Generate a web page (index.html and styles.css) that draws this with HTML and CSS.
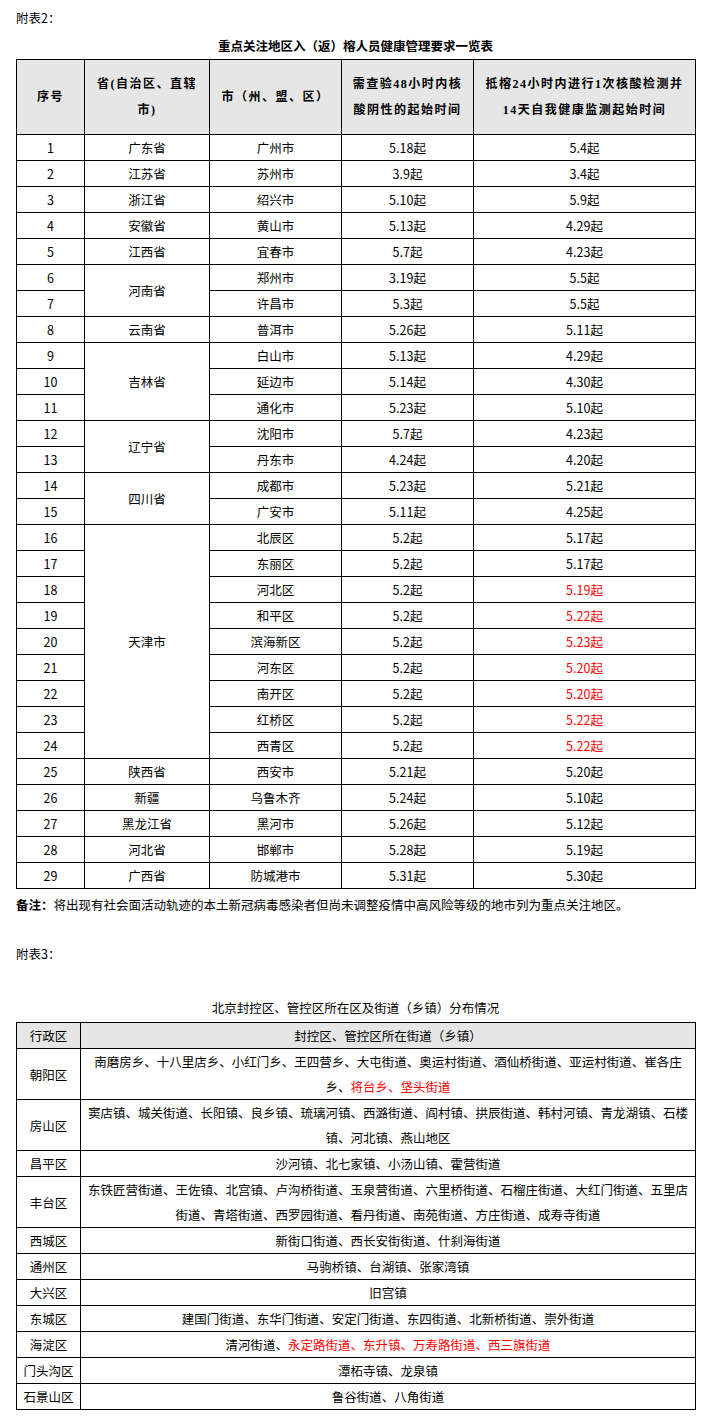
FILE: index.html
```html
<!DOCTYPE html>
<html lang="zh-CN">
<head>
<meta charset="utf-8">
<title>附表</title>
<link rel="stylesheet" href="styles.css">
</head>
<body>
<p class="label">附表2：</p>
<p class="title bold">重点关注地区入（返）榕人员健康管理要求一览表</p>
<table class="t1">
<colgroup><col class="c1"><col class="c2"><col class="c3"><col class="c4"><col class="c5"></colgroup>
<thead>
<tr>
<th>序号</th>
<th>省(自治区、直辖<br>市)</th>
<th>市（州、盟、区）</th>
<th>需查验48小时内核<br>酸阴性的起始时间</th>
<th>抵榕24小时内进行1次核酸检测并<br>14天自我健康监测起始时间</th>
</tr>
</thead>
<tbody>
<tr><td>1</td><td>广东省</td><td>广州市</td><td>5.18起</td><td>5.4起</td></tr>
<tr><td>2</td><td>江苏省</td><td>苏州市</td><td>3.9起</td><td>3.4起</td></tr>
<tr><td>3</td><td>浙江省</td><td>绍兴市</td><td>5.10起</td><td>5.9起</td></tr>
<tr><td>4</td><td>安徽省</td><td>黄山市</td><td>5.13起</td><td>4.29起</td></tr>
<tr><td>5</td><td>江西省</td><td>宜春市</td><td>5.7起</td><td>4.23起</td></tr>
<tr><td>6</td><td rowspan="2">河南省</td><td>郑州市</td><td>3.19起</td><td>5.5起</td></tr>
<tr><td>7</td><td>许昌市</td><td>5.3起</td><td>5.5起</td></tr>
<tr><td>8</td><td>云南省</td><td>普洱市</td><td>5.26起</td><td>5.11起</td></tr>
<tr><td>9</td><td rowspan="3">吉林省</td><td>白山市</td><td>5.13起</td><td>4.29起</td></tr>
<tr><td>10</td><td>延边市</td><td>5.14起</td><td>4.30起</td></tr>
<tr><td>11</td><td>通化市</td><td>5.23起</td><td>5.10起</td></tr>
<tr><td>12</td><td rowspan="2">辽宁省</td><td>沈阳市</td><td>5.7起</td><td>4.23起</td></tr>
<tr><td>13</td><td>丹东市</td><td>4.24起</td><td>4.20起</td></tr>
<tr><td>14</td><td rowspan="2">四川省</td><td>成都市</td><td>5.23起</td><td>5.21起</td></tr>
<tr><td>15</td><td>广安市</td><td>5.11起</td><td>4.25起</td></tr>
<tr><td>16</td><td rowspan="9">天津市</td><td>北辰区</td><td>5.2起</td><td>5.17起</td></tr>
<tr><td>17</td><td>东丽区</td><td>5.2起</td><td>5.17起</td></tr>
<tr><td>18</td><td>河北区</td><td>5.2起</td><td class="red">5.19起</td></tr>
<tr><td>19</td><td>和平区</td><td>5.2起</td><td class="red">5.22起</td></tr>
<tr><td>20</td><td>滨海新区</td><td>5.2起</td><td class="red">5.23起</td></tr>
<tr><td>21</td><td>河东区</td><td>5.2起</td><td class="red">5.20起</td></tr>
<tr><td>22</td><td>南开区</td><td>5.2起</td><td class="red">5.20起</td></tr>
<tr><td>23</td><td>红桥区</td><td>5.2起</td><td class="red">5.22起</td></tr>
<tr><td>24</td><td>西青区</td><td>5.2起</td><td class="red">5.22起</td></tr>
<tr><td>25</td><td>陕西省</td><td>西安市</td><td>5.21起</td><td>5.20起</td></tr>
<tr><td>26</td><td>新疆</td><td>乌鲁木齐</td><td>5.24起</td><td>5.10起</td></tr>
<tr><td>27</td><td>黑龙江省</td><td>黑河市</td><td>5.26起</td><td>5.12起</td></tr>
<tr><td>28</td><td>河北省</td><td>邯郸市</td><td>5.28起</td><td>5.19起</td></tr>
<tr><td>29</td><td>广西省</td><td>防城港市</td><td>5.31起</td><td>5.30起</td></tr>
</tbody>
</table>
<p class="note"><b>备注：</b>将出现有社会面活动轨迹的本土新冠病毒感染者但尚未调整疫情中高风险等级的地市列为重点关注地区。</p>
<p class="label label3">附表3：</p>
<p class="title title3">北京封控区、管控区所在区及街道（乡镇）分布情况</p>
<table class="t3">
<colgroup><col class="d1"><col class="d2"></colgroup>
<thead>
<tr><th>行政区</th><th>封控区、管控区所在街道（乡镇）</th></tr>
</thead>
<tbody>
<tr><td>朝阳区</td><td>南磨房乡、十八里店乡、小红门乡、王四营乡、大屯街道、奥运村街道、酒仙桥街道、亚运村街道、崔各庄乡、<span class="red">将台乡、垡头街道</span></td></tr>
<tr><td>房山区</td><td>窦店镇、城关街道、长阳镇、良乡镇、琉璃河镇、西潞街道、阎村镇、拱辰街道、韩村河镇、青龙湖镇、石楼镇、河北镇、燕山地区</td></tr>
<tr><td>昌平区</td><td>沙河镇、北七家镇、小汤山镇、霍营街道</td></tr>
<tr><td>丰台区</td><td>东铁匠营街道、王佐镇、北宫镇、卢沟桥街道、玉泉营街道、六里桥街道、石榴庄街道、大红门街道、五里店街道、青塔街道、西罗园街道、看丹街道、南苑街道、方庄街道、成寿寺街道</td></tr>
<tr><td>西城区</td><td>新街口街道、西长安街街道、什刹海街道</td></tr>
<tr><td>通州区</td><td>马驹桥镇、台湖镇、张家湾镇</td></tr>
<tr><td>大兴区</td><td>旧宫镇</td></tr>
<tr><td>东城区</td><td>建国门街道、东华门街道、安定门街道、东四街道、北新桥街道、崇外街道</td></tr>
<tr><td>海淀区</td><td>清河街道、<span class="red">永定路街道、东升镇、万寿路街道、西三旗街道</span></td></tr>
<tr><td>门头沟区</td><td>潭柘寺镇、龙泉镇</td></tr>
<tr><td>石景山区</td><td>鲁谷街道、八角街道</td></tr>
</tbody>
</table>
</body>
</html>
```

FILE: styles.css
```css
html, body {
  margin: 0;
  padding: 0;
  background: #ffffff;
}
body {
  padding: 5px 16px 0 16px;
  font-family: "Noto Sans CJK SC", "Noto Sans", sans-serif;
  font-size: 12.5px;
  line-height: 25px;
  color: #000000;
}
p {
  margin: 0;
}
.label {
  height: 25px;
}
.title {
  margin-top: 3px;
  margin-bottom: 1px;
  text-align: center;
}
.bold {
  font-weight: bold;
}
table {
  border-collapse: collapse;
  table-layout: fixed;
  width: 679px;
}
th, td {
  border: 1px solid #000000;
  padding: 0 2px;
  text-align: center;
  vertical-align: middle;
  line-height: 25px;
  font-weight: normal;
}
.t1 .c1 { width: 68px; }
.t1 .c2 { width: 125px; }
.t1 .c3 { width: 132px; }
.t1 .c4 { width: 132px; }
.t1 .c5 { width: 222px; }
.t1 th {
  background: #e6e6e6;
  height: 74px;
  line-height: 26px;
  font-family: "Liberation Serif", "Noto Sans CJK SC", serif;
  font-weight: bold;
  font-size: 12px;
  letter-spacing: 1.5px;
}
.red {
  color: #ff0000;
}
.note {
  margin-top: 3px;
}
.label3 {
  margin-top: 24px;
}
.title3 {
  margin-top: 29px;
  margin-bottom: 2px;
}
.t3 .d1 { width: 64px; }
.t3 .d2 { width: 615px; }
.t3 th {
  background: #e6e6e6;
}
.t3 td:last-child {
  padding: 0 5px;
}
.t3 td:first-child {
  padding: 0;
  white-space: nowrap;
}
```
